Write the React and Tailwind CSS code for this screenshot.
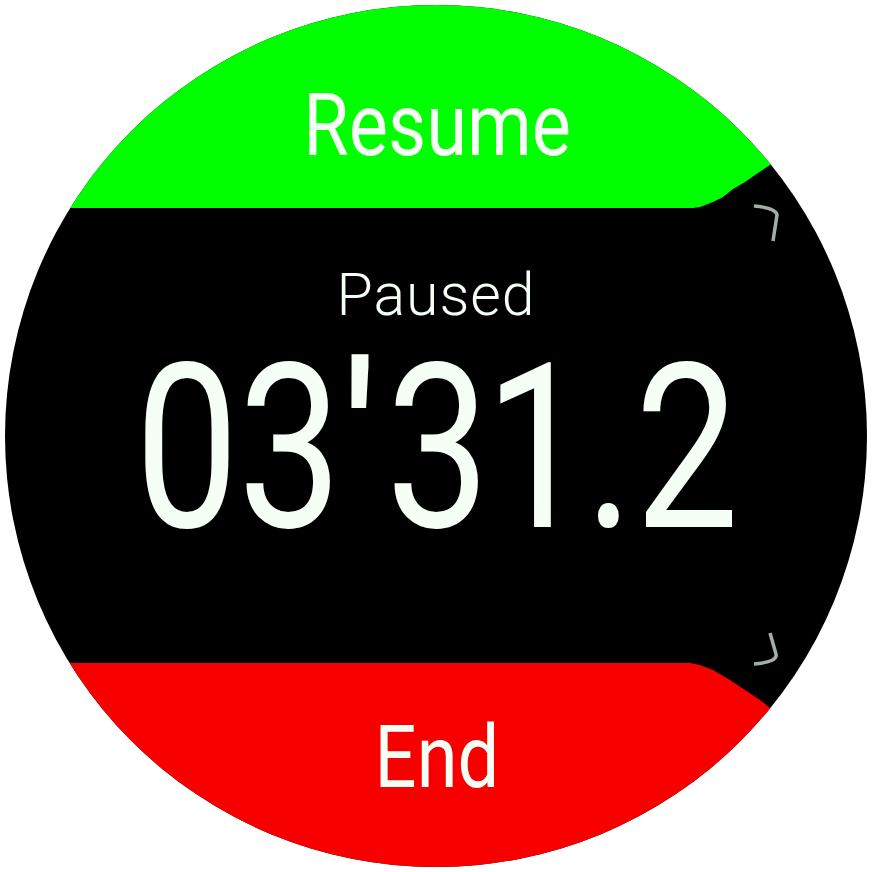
import React from "react";

const cells = [
  { ch: "0", w: "w-[93px]", x: "scale-x-[0.8]" },
  { ch: "3", w: "w-[114px]", x: "scale-x-[0.8]" },
  { ch: "'", w: "w-[26px]", x: "scale-x-[1]" },
  { ch: "3", w: "w-[130px]", x: "scale-x-[0.8]" },
  { ch: "1", w: "w-[68px]", x: "scale-x-[0.8]" },
  { ch: ".", w: "w-[76px]", x: "scale-x-[0.8]" },
  { ch: "2", w: "w-[80px]", x: "scale-x-[0.8]" },
];

export default function App() {
  return (
    <div className="relative w-[872px] h-[872px] p-[5px] bg-white [font-family:Roboto,sans-serif]">
      <div className="w-[862px] h-[862px] rounded-full overflow-hidden bg-black flex flex-col">
        <div className="h-[203px] shrink-0 bg-[#00ff00] flex justify-center pt-[76px] [clip-path:polygon(0_0,862px_0,862px_82px,775px_152px,765px_160px,753px_168px,740px_177px,728px_184px,718px_192px,708px_197px,695px_202px,688px_203px,0_203px)]">
          <span className="inline-block h-[88px] text-[88px] leading-none text-[#f5fff5] scale-x-[0.84] pl-[3px]">
            Resume
          </span>
        </div>
        <div className="flex-1 flex flex-col items-center">
          <div className="pt-[57px] h-[125px] text-[59px] leading-none font-light tracking-[1px] text-[#f5fff5]">
            Paused
          </div>
          <div className="flex pr-[5px] h-[231px] text-[231px] leading-none text-[#f5fff5]">
            {cells.map((c, i) => (
              <span key={i} className={`${c.w} flex justify-center`}>
                <span className={`inline-block ${c.x}`}>{c.ch}</span>
              </span>
            ))}
          </div>
        </div>
        <div className="h-[204px] shrink-0 bg-[#f80000] flex justify-center pt-[50px] [clip-path:polygon(0_0,685px_0,695px_2px,708px_7px,725px_17px,740px_27px,755px_37px,765px_45px,775px_53px,862px_123px,862px_204px,0_204px)]">
          <span className="inline-block h-[88px] text-[88px] leading-none text-[#f5fff5] scale-x-[0.84] pl-[3px]">
            End
          </span>
        </div>
      </div>
      <svg className="absolute inset-0 pointer-events-none" width="872" height="872" viewBox="0 0 872 872">
        <path d="M754 206 Q776 208 777 215 L773 241" fill="none" stroke="#a5aea5" strokeWidth="3.5" strokeLinejoin="round" />
        <path d="M770 633 L776 654 Q778 662 754 664" fill="none" stroke="#a5aea5" strokeWidth="3.5" strokeLinejoin="round" />
      </svg>
    </div>
  );
}
